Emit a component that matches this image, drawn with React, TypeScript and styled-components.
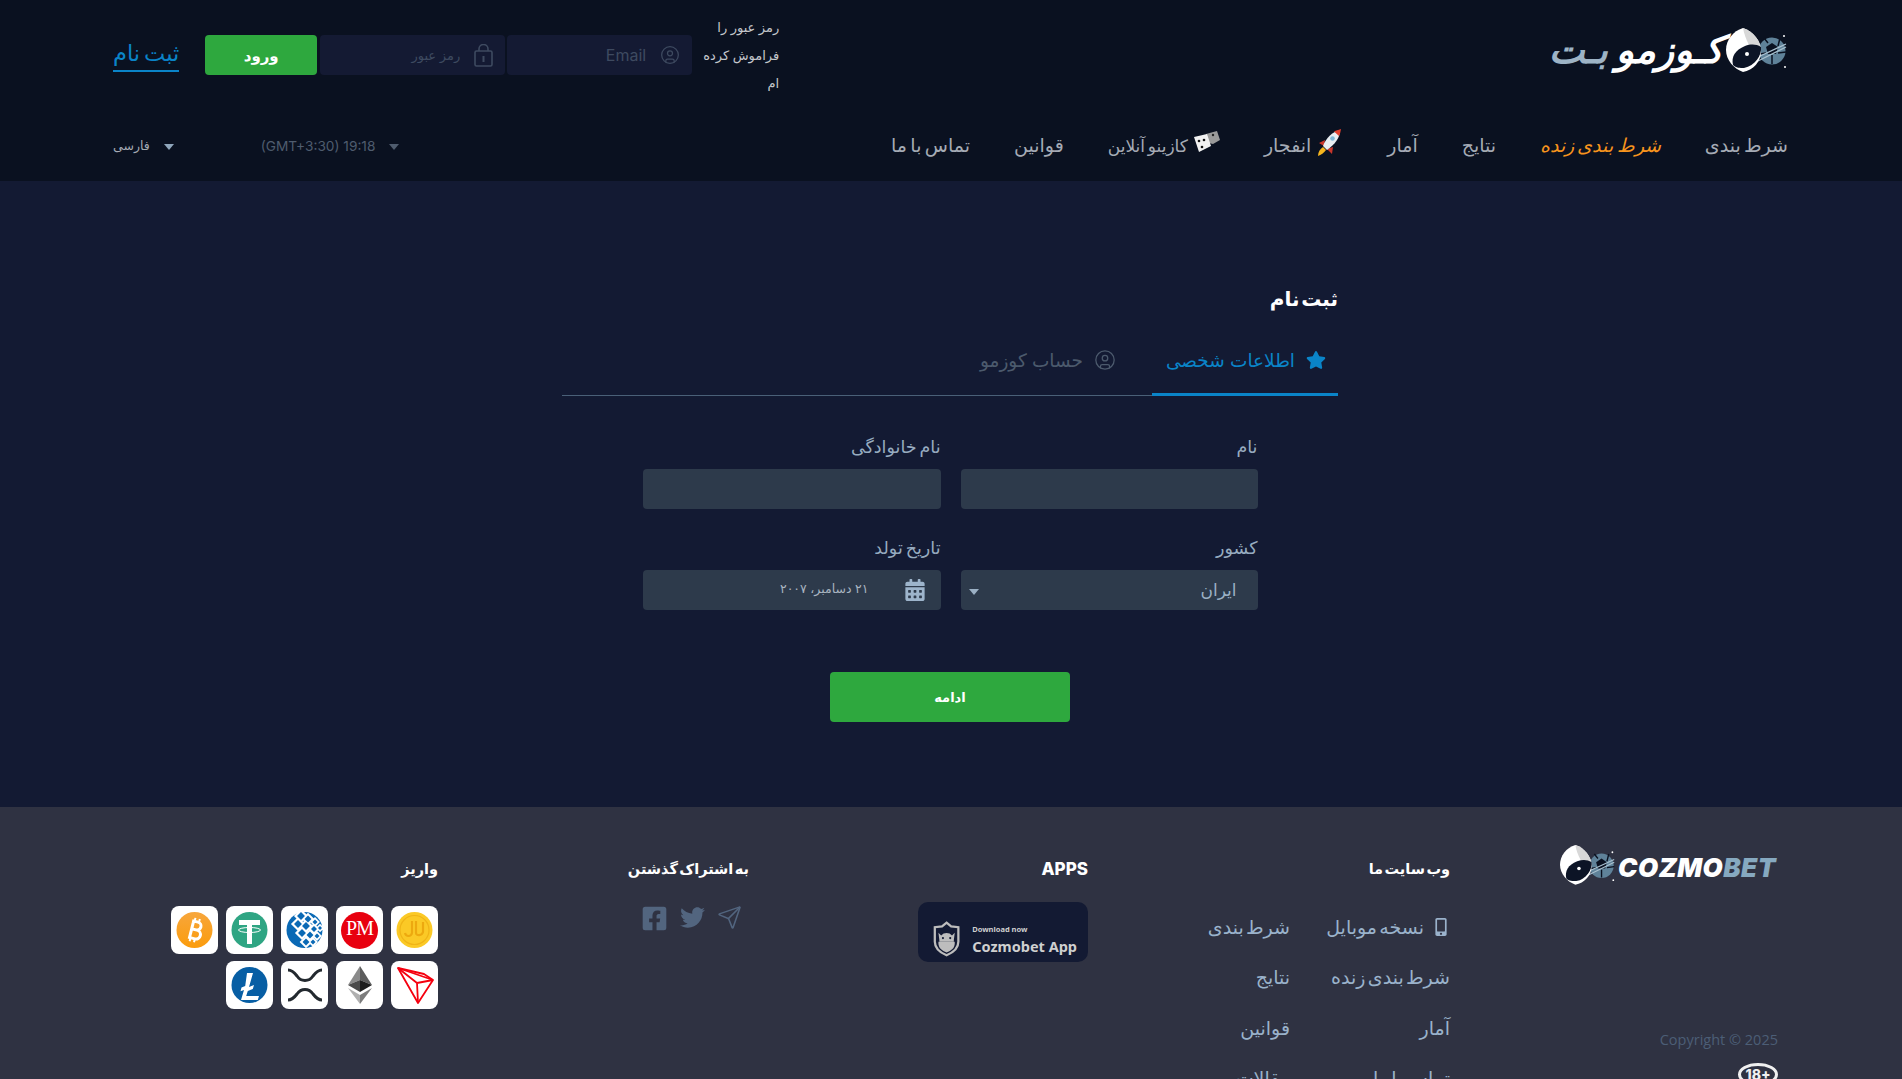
import styled, { createGlobalStyle } from "styled-components";
import { CircleUser, Send } from "lucide-react";
import { FaCalendarAlt, FaFacebookSquare, FaMobileAlt, FaStar, FaTwitter } from "react-icons/fa";

const GlobalStyle = createGlobalStyle`
    html, body {
        margin: 0;
        height: 100%;
        overflow: hidden;
        background: #131a33;
    }
    * {
        box-sizing: border-box;
    }
    body {
        font-family: Inter, "DejaVu Sans", sans-serif;
    }
`;

const Page = styled.div`
    width: 100%;
`;

const Header = styled.header`
    background: #0a1120;
    height: 181px;
    padding: 0 114px 0 113px;
`;

const TopRow = styled.div`
    height: 110px;
    display: flex;
    justify-content: space-between;
    align-items: center;
`;

const LogoWrap = styled.div`
    display: flex;
    align-items: center;
    height: 44px;
    margin-top: -10px;
`;

const PersianMark = styled.span`
    font-family: "DejaVu Sans", sans-serif;
    font-size: 38px;
    font-weight: 700;
    font-style: italic;
    line-height: 44px;
    margin-right: 3px;
    color: #fff;
    white-space: nowrap;
    b {
        color: #9db3c5;
        margin-right: 8px;
    }
`;

const LoginBar = styled.div`
    display: flex;
    align-items: center;
`;

const Forgot = styled.a`
    width: 78px;
    margin-left: 9px;
    font-size: 13px;
    line-height: 28px;
    font-weight: 500;
    color: #c5c8cd;
`;

const LoginField = styled.label`
    width: 185px;
    height: 40px;
    margin-left: 2px;
    padding: 0 12px;
    display: flex;
    align-items: center;
    gap: 12px;
    border-radius: 4px;
    background: #141a33;
    color: #3e4a60;
    svg {
        flex: none;
    }
`;

const LoginInput = styled.input<{ $small?: boolean }>`
    width: 100%;
    border: none;
    outline: none;
    background: transparent;
    font-family: inherit;
    font-size: ${(props) => (props.$small ? "13px" : "16px")};
    &::placeholder {
        color: #3e4a60;
    }
`;

const LoginButton = styled.button`
    width: 112px;
    height: 40px;
    margin-right: 1px;
    border: none;
    border-radius: 4px;
    background: #2ea83e;
    color: #fff;
    font-family: inherit;
    font-size: 15px;
    font-weight: 700;
`;

const RegisterLink = styled.a`
    margin-right: 26px;
    padding-bottom: 2px;
    border-bottom: 2px solid #0a84c8;
    color: #0a84c8;
    font-size: 22.5px;
    font-weight: 500;
    line-height: 30px;
    word-spacing: -2px;
`;

const NavRow = styled.nav`
    height: 71px;
    display: flex;
    justify-content: space-between;
    align-items: center;
`;

const NavList = styled.div`
    display: flex;
    align-items: center;
    gap: 44px;
`;

const NavItem = styled.a<{ $active?: boolean; $small?: boolean }>`
    display: flex;
    align-items: center;
    gap: 4px;
    font-size: ${(props) => (props.$small ? "17px" : "19px")};
    font-style: ${(props) => (props.$active ? "italic" : "normal")};
    color: ${(props) => (props.$active ? "#f7941d" : "#a5abb5")};
    word-spacing: -2px;
    white-space: nowrap;
    svg {
        margin-top: -8px;
    }
`;

const NavMeta = styled.div`
    display: flex;
    align-items: center;
    gap: 87px;
`;

const Dropdown = styled.div<{ $bright?: boolean }>`
    direction: ltr;
    display: flex;
    align-items: center;
    gap: 14px;
    font-size: ${(props) => (props.$bright ? "12.5px" : "13.7px")};
    color: ${(props) => (props.$bright ? "#a5abb5" : "#4f5c6e")};
    &::after {
        content: "";
        width: 0;
        height: 0;
        margin-top: 3px;
        border-left: 5px solid transparent;
        border-right: 5px solid transparent;
        border-top: 6px solid ${(props) => (props.$bright ? "#8fa6bb" : "#4f5c6e")};
    }
`;

const Main = styled.main`
    background: #131a33;
    height: 626px;
    padding-top: 102px;
`;

const Panel = styled.section`
    width: 776px;
    margin: 0 auto;
    transform: translateX(-1px);
`;

const Title = styled.h1`
    margin: 0 0 17px;
    font-size: 20px;
    font-weight: 700;
    line-height: 32px;
    word-spacing: -3px;
    color: #fff;
`;

const Tabs = styled.div`
    height: 64px;
    display: flex;
    border-bottom: 1px solid #4a6078;
`;

const Tab = styled.div<{ $active?: boolean }>`
    height: 64px;
    padding: 0 12px 5px ${(props) => (props.$active ? "14px" : "13px")};
    display: flex;
    align-items: center;
    gap: 11px;
    font-size: 18.5px;
    color: ${(props) => (props.$active ? "#0a84c8" : "#4c5a6d")};
    border-bottom: 3px solid ${(props) => (props.$active ? "#0a84c8" : "transparent")};
    margin-left: ${(props) => (props.$active ? "24px" : "0")};
`;

const Form = styled.form`
    width: 615px;
    margin: 39px auto 0;
    display: grid;
    grid-template-columns: 297px 298px;
    gap: 27px 20px;
`;

const Field = styled.div`
    display: flex;
    flex-direction: column;
    gap: 10px;
`;

const Label = styled.label`
    font-size: 17.5px;
    line-height: 24px;
    word-spacing: -2px;
    color: #97acc0;
`;

const Box = styled.div`
    height: 40px;
    border-radius: 4px;
    background: #2d3a4b;
    display: flex;
    align-items: center;
    color: #9bb0c4;
`;

const SelectBox = styled(Box)`
    padding: 0 21px 0 8px;
    justify-content: space-between;
    font-size: 17px;
    &::after {
        content: "";
        width: 0;
        height: 0;
        margin-top: 3px;
        border-left: 5px solid transparent;
        border-right: 5px solid transparent;
        border-top: 6px solid #9bb0c4;
    }
`;

const DateBox = styled(Box)`
    padding: 0 15px;
    gap: 35px;
    font-size: 12.5px;
    color: #a9b4c0;
    span {
        margin-top: -4px;
    }
    svg {
        color: #9db4cb;
    }
`;

const SubmitRow = styled.div`
    display: flex;
    justify-content: center;
    margin-top: 62px;
`;

const SubmitButton = styled.button`
    width: 240px;
    height: 50px;
    border: none;
    border-radius: 4px;
    background: #2ea83e;
    color: #fff;
    font-family: inherit;
    font-size: 13px;
    font-weight: 700;
`;

const Footer = styled.footer`
    height: 272px;
    background: #2f3242;
    padding: 38px 114px 0 0;
    display: flex;
`;

const BrandCol = styled.div`
    width: 338px;
    padding: 0 10px 0 110px;
    display: flex;
    flex-direction: column;
    align-items: flex-start;
`;

const LatinMark = styled.span`
    font-family: Inter, sans-serif;
    font-size: 26px;
    font-weight: 900;
    font-style: italic;
    letter-spacing: 0.5px;
    margin-top: 6px;
    color: #fff;
    b {
        font-weight: 900;
        color: #86a9c0;
    }
`;

const FooterLogo = styled.div`
    direction: ltr;
    display: flex;
    align-items: center;
    gap: 2px;
    width: 218px;
    height: 40px;
`;

const Copyright = styled.div`
    direction: ltr;
    margin-top: 145px;
    font-family: "Open Sans", sans-serif;
    font-size: 14.5px;
    color: #4c5e76;
`;

const AgeBadge = styled.div`
    margin-top: 14px;
    width: 40px;
    height: 40px;
    border-radius: 50%;
    border: 3px solid #f0f0f0;
    color: #f0f0f0;
    display: flex;
    align-items: center;
    justify-content: center;
    direction: ltr;
    font-size: 14px;
    font-weight: 800;
`;

const FooterCol = styled.div<{ $width: number }>`
    width: ${(props) => props.$width}px;
    padding-top: 11px;
`;

const FooterTitle = styled.h3<{ $latin?: boolean }>`
    margin: 0;
    font-size: ${(props) => (props.$latin ? "17px" : "14.5px")};
    font-weight: ${(props) => (props.$latin ? 800 : 700)};
    line-height: 26px;
    word-spacing: -2px;
    color: #fff;
`;

const LinkGrid = styled.div`
    margin-top: 20px;
    display: grid;
    grid-template-columns: 160px auto;
    grid-auto-rows: 50.5px;
    align-items: center;
    justify-content: start;
`;

const FooterLink = styled.a`
    display: flex;
    align-items: center;
    gap: 8px;
    font-size: 19px;
    word-spacing: -3px;
    color: #9ab2cb;
    white-space: nowrap;
`;

const AppBadge = styled.div`
    direction: ltr;
    margin-top: 20px;
    width: 170px;
    height: 60px;
    border-radius: 10px;
    background: #131a33;
    display: flex;
    align-items: flex-end;
    gap: 12px;
    padding: 0 11px 4px 15px;
`;

const AppText = styled.div`
    font-family: "Noto Sans", sans-serif;
    color: #cfcfcf;
    small {
        display: block;
        font-size: 7.5px;
        font-weight: 700;
        line-height: 10px;
    }
    strong {
        display: block;
        font-size: 14.5px;
        font-weight: 700;
        line-height: 24px;
        white-space: nowrap;
    }
`;

const SocialRow = styled.div`
    margin-top: 23px;
    padding-right: 7px;
    display: flex;
    gap: 12px;
    color: #52657f;
`;

const PayGrid = styled.div`
    margin-top: 24px;
    display: grid;
    grid-template-columns: repeat(5, 47px);
    grid-auto-rows: 48px;
    gap: 7px 8px;
`;

const PayTile = styled.div`
    border-radius: 8px;
    background: #fff;
    display: flex;
    align-items: center;
    justify-content: center;
    overflow: hidden;
`;

const PmText = styled.span`
    width: 37px;
    height: 37px;
    border-radius: 50%;
    background: #e8000f;
    color: #fff;
    display: flex;
    align-items: center;
    justify-content: center;
    direction: ltr;
    font-family: "Liberation Serif", serif;
    font-size: 20px;
    letter-spacing: -1px;
    padding-bottom: 3px;
`;

function Helmet({ size = 62 }: { size?: number }) {
    return (
        <svg width={size} height={(size * 44) / 62} viewBox="0 0 62 44">
            <circle cx="46" cy="23" r="13.5" fill="#5f8299" />
            <path d="M46 15l6 4-2 7h-8l-2-7z" fill="#0a1120" />
            <path d="M38 10l4 5M54 10l-2 8M60 24l-8 1M46 36v-9M34 26l6-1" stroke="#0a1120" strokeWidth="1.5" />
            <path d="M30 30L60 16M32 33L60 19" stroke="#a9c0cf" strokeWidth="1.3" />
            <path d="M17 0C27 3 35 13 35 23c0 11-8 19-18 21C8 41 0 32 0 22 0 12 7 3 17 0z" fill="#fff" />
            <path d="M17 0C27 3 35 13 35 23l-12-6C20 11 18 6 17 0z" fill="#d8d8d8" />
            <path d="M7 37c-2-8 2-15 12-19 6-2 11-2 16 1 1 8-6 19-17 21-4 0-8 0-11-3z" fill="#0c1426" />
            <circle cx="21" cy="26" r="2" fill="#fff" />
            <circle cx="58" cy="8" r="1" fill="#fff" />
            <circle cx="59" cy="39" r="1" fill="#fff" />
        </svg>
    );
}

function LockIcon() {
    return (
        <svg width="19" height="23" viewBox="0 0 19 23" fill="none" stroke="#3e4a60" strokeWidth="1.6">
            <rect x="1" y="7" width="17" height="15" rx="1.5" />
            <path d="M5 7V5a4.5 4.5 0 0 1 9 0v2" />
            <path d="M9.5 12v6" strokeWidth="2" />
        </svg>
    );
}

function Rocket() {
    return (
        <svg width="28" height="30" viewBox="0 0 28 30">
            <path d="M3 29c0-4 2-7 5-9l3 3c-2 3-5 5-8 6z" fill="#f5b51e" />
            <path d="M4 16l6-3-1 6zM18 20l-6 2 5 5z" fill="#c9362b" />
            <path d="M8 19C11 11 17 5 25 3c0 8-5 14-13 20z" fill="#e9eef2" />
            <path d="M19 4.500c2-1 4-1.500 7-2.500-.5 3-1 5-2 7z" fill="#e0402f" />
            <circle cx="17.500" cy="11.500" r="2.300" fill="#7fb8d8" />
        </svg>
    );
}

function Dice() {
    return (
        <svg width="28" height="22" viewBox="0 0 28 22">
            <path d="M14 3l11-3 3 9-7 4-4-1z" fill="#9a9a9a" />
            <path d="M2 6l13-3 4 12-12 6z" fill="#f2f2f2" />
            <circle cx="7" cy="10" r="1.300" fill="#111" />
            <circle cx="12" cy="9" r="1.300" fill="#111" />
            <circle cx="10" cy="16" r="1.300" fill="#111" />
            <circle cx="21" cy="4" r="1.200" fill="#222" />
        </svg>
    );
}

function ShieldBot() {
    return (
        <svg width="30" height="38" viewBox="0 0 30 38">
            <path d="M15 1l5 4 8 1v16c0 8-6 12-13 15C8 34 2 30 2 22V6l8-1z" fill="none" stroke="#bdbdbd" strokeWidth="2.500" />
            <path d="M6 12l3 3a8 8 0 0 1 12 0l3-3-1 8v2H7v-2z" fill="#bdbdbd" />
            <path d="M6 22h18v2c0 5-4 8-9 10-5-2-9-5-9-10z" fill="#bdbdbd" />
            <circle cx="11" cy="18" r="1.200" fill="#131a33" />
            <circle cx="19" cy="18" r="1.200" fill="#131a33" />
        </svg>
    );
}

function RiyalCoin() {
    return (
        <svg width="37" height="38" viewBox="0 0 37 38">
            <circle cx="18.500" cy="19" r="18" fill="#fbc926" />
            <circle cx="18.500" cy="19" r="14.500" fill="none" stroke="#f0b417" strokeWidth="1.200" />
            <path d="M9 22c1 4 6 4 7 0V10M20 10v12c0 3 6 3 7-1V11" fill="none" stroke="#eda90f" strokeWidth="2.200" />
        </svg>
    );
}

function WebMoney() {
    const cells = [
        [15, 5, 4], [22, 8, 3.500], [29, 11, 2.500], [12, 13, 4], [20, 15, 4], [28, 18, 3], [34, 17, 2],
        [16, 22, 4], [24, 24, 3.500], [31, 25, 2.500], [20, 31, 3.500], [27, 31, 2.500],
    ];
    return (
        <svg width="37" height="38" viewBox="0 0 37 38">
            <circle cx="18.500" cy="19" r="18" fill="#0a69b5" />
            {cells.map(([x, y, s]) => (
                <rect
                    key={`${x}-${y}`}
                    x={x - s - 1}
                    y={y - s - 1}
                    width={s * 2 + 2}
                    height={s * 2 + 2}
                    fill="#fff"
                    transform={`rotate(45 ${x} ${y})`}
                />
            ))}
            {cells.map(([x, y, s]) => (
                <rect
                    key={`d-${x}-${y}`}
                    x={x - s * 0.7}
                    y={y - s * 0.7}
                    width={s * 1.4}
                    height={s * 1.4}
                    fill="#0a69b5"
                    transform={`rotate(45 ${x} ${y})`}
                />
            ))}
        </svg>
    );
}

function Tether() {
    return (
        <svg width="37" height="38" viewBox="0 0 37 38">
            <circle cx="18.500" cy="19" r="18" fill="#2fa583" />
            <path d="M8 9h21v5h-8v19h-5V14H8z" fill="#fff" />
            <ellipse cx="18.500" cy="19" rx="11" ry="2.500" fill="none" stroke="#fff" strokeWidth="1" />
        </svg>
    );
}

function Bitcoin() {
    return (
        <svg width="37" height="38" viewBox="0 0 37 38">
            <defs>
                <linearGradient id="btc" x1="0" y1="0" x2="0" y2="1">
                    <stop offset="0" stopColor="#f7a63c" />
                    <stop offset="1" stopColor="#fb9c0c" />
                </linearGradient>
            </defs>
            <circle cx="18.500" cy="19" r="18" fill="url(#btc)" />
            <g transform="rotate(14 18.500 19)" fill="none" stroke="#fff" strokeWidth="3">
                <path d="M14 10.500h6a4 4 0 0 1 0 8h-6M14 18.500h7a4.500 4.500 0 0 1 0 9h-7M15.500 9v20" />
                <path d="M16.500 7v3M21 7v3M16.500 28v3M21 28v3" strokeWidth="2" />
            </g>
        </svg>
    );
}

function Litecoin() {
    return (
        <svg width="37" height="38" viewBox="0 0 37 38">
            <circle cx="18.500" cy="19" r="18" fill="#075ea4" />
            <path d="M16 7h6l-4 14 5-2-1.200 4-5 2-1.600 5H28l-1.200 4H10l3-10-3.500 1.300 1-3.700 3.700-1.500z" fill="#fff" />
        </svg>
    );
}

function Ethereum() {
    return (
        <svg width="24" height="38" viewBox="0 0 24 38">
            <path d="M12 0L0 19l12-5z" fill="#8a8a8a" />
            <path d="M12 0l12 19-12-5z" fill="#5c5c5c" />
            <path d="M0 19l12-5v12z" fill="#4a4a4a" />
            <path d="M24 19l-12-5v12z" fill="#1f1f1f" />
            <path d="M0 22l12 16v-9z" fill="#b0b0b0" />
            <path d="M24 22L12 38v-9z" fill="#7c7c7c" />
        </svg>
    );
}

function Xrp() {
    return (
        <svg width="38" height="36" viewBox="0 0 38 36" fill="none" stroke="#23292f" strokeWidth="3">
            <path d="M2 3c4 0 6 2 9 6 4 6 12 6 16 0 3-4 5-6 9-6" />
            <path d="M2 33c4 0 6-2 9-6 4-6 12-6 16 0 3 4 5 6 9 6" />
        </svg>
    );
}

function Tron() {
    return (
        <svg width="38" height="38" viewBox="0 0 38 38" fill="none" stroke="#f5000f" strokeWidth="1.800" strokeLinejoin="round">
            <path d="M2 2l35 12-15 23z" />
            <path d="M2 2l19 15 16-3M21 17l1 20M2 2l26 6 9 6" />
        </svg>
    );
}

function App() {
    return (
        <Page dir="rtl">
            <GlobalStyle />
            <Header>
                <TopRow>
                    <LogoWrap>
                        <Helmet />
                        <PersianMark>
                            کـوزمو<b>بـت</b>
                        </PersianMark>
                    </LogoWrap>
                    <LoginBar>
                        <Forgot>رمز عبور را فراموش کرده ام</Forgot>
                        <LoginField>
                            <CircleUser size={20} strokeWidth={1.5} />
                            <LoginInput placeholder="Email" />
                        </LoginField>
                        <LoginField>
                            <LockIcon />
                            <LoginInput $small placeholder="رمز عبور" />
                        </LoginField>
                        <LoginButton>ورود</LoginButton>
                        <RegisterLink>ثبت نام</RegisterLink>
                    </LoginBar>
                </TopRow>
                <NavRow>
                    <NavList>
                        <NavItem>شرط بندی</NavItem>
                        <NavItem $active>شرط بندی زنده</NavItem>
                        <NavItem>نتایج</NavItem>
                        <NavItem>آمار</NavItem>
                        <NavItem>
                            <Rocket />
                            انفجار
                        </NavItem>
                        <NavItem $small>
                            <Dice />
                            کازینو آنلاین
                        </NavItem>
                        <NavItem>قوانین</NavItem>
                        <NavItem>تماس با ما</NavItem>
                    </NavList>
                    <NavMeta>
                        <Dropdown>
                            <span>(GMT+3:30) 19:18</span>
                        </Dropdown>
                        <Dropdown $bright>فارسی</Dropdown>
                    </NavMeta>
                </NavRow>
            </Header>
            <Main>
                <Panel>
                    <Title>ثبت نام</Title>
                    <Tabs>
                        <Tab $active>
                            <FaStar size={20} />
                            اطلاعات شخصی
                        </Tab>
                        <Tab>
                            <CircleUser size={22} strokeWidth={1.4} />
                            حساب کوزمو
                        </Tab>
                    </Tabs>
                    <Form>
                        <Field>
                            <Label>نام</Label>
                            <Box />
                        </Field>
                        <Field>
                            <Label>نام خانوادگی</Label>
                            <Box />
                        </Field>
                        <Field>
                            <Label>کشور</Label>
                            <SelectBox>ایران</SelectBox>
                        </Field>
                        <Field>
                            <Label>تاریخ تولد</Label>
                            <DateBox>
                                <FaCalendarAlt size={22} />
                                <span>۲۱ دسامبر، ۲۰۰۷</span>
                            </DateBox>
                        </Field>
                    </Form>
                    <SubmitRow>
                        <SubmitButton>ادامه</SubmitButton>
                    </SubmitRow>
                </Panel>
            </Main>
            <Footer>
                <BrandCol>
                    <FooterLogo>
                        <Helmet size={56} />
                        <LatinMark>
                            COZMO<b>BET</b>
                        </LatinMark>
                    </FooterLogo>
                    <Copyright>Copyright © 2025</Copyright>
                    <AgeBadge>18+</AgeBadge>
                </BrandCol>
                <FooterCol $width={362}>
                    <FooterTitle>وب سایت ما</FooterTitle>
                    <LinkGrid>
                        <FooterLink>
                            <FaMobileAlt size={18} />
                            نسخه موبایل
                        </FooterLink>
                        <FooterLink>شرط بندی</FooterLink>
                        <FooterLink>شرط بندی زنده</FooterLink>
                        <FooterLink>نتایج</FooterLink>
                        <FooterLink>آمار</FooterLink>
                        <FooterLink>قوانین</FooterLink>
                        <FooterLink>تماس با ما</FooterLink>
                        <FooterLink>مقالات</FooterLink>
                    </LinkGrid>
                </FooterCol>
                <FooterCol $width={339}>
                    <FooterTitle $latin>APPS</FooterTitle>
                    <AppBadge>
                        <ShieldBot />
                        <AppText>
                            <small>Download now</small>
                            <strong>Cozmobet App</strong>
                        </AppText>
                    </AppBadge>
                </FooterCol>
                <FooterCol $width={311}>
                    <FooterTitle>به اشتراک گذشتن</FooterTitle>
                    <SocialRow>
                        <Send size={25} strokeWidth={1.5} />
                        <FaTwitter size={25} />
                        <FaFacebookSquare size={27} />
                    </SocialRow>
                </FooterCol>
                <FooterCol $width={300}>
                    <FooterTitle>واریز</FooterTitle>
                    <PayGrid>
                        <PayTile><RiyalCoin /></PayTile>
                        <PayTile><PmText>PM</PmText></PayTile>
                        <PayTile><WebMoney /></PayTile>
                        <PayTile><Tether /></PayTile>
                        <PayTile><Bitcoin /></PayTile>
                        <PayTile><Tron /></PayTile>
                        <PayTile><Ethereum /></PayTile>
                        <PayTile><Xrp /></PayTile>
                        <PayTile><Litecoin /></PayTile>
                    </PayGrid>
                </FooterCol>
            </Footer>
        </Page>
    );
}

export default App;
